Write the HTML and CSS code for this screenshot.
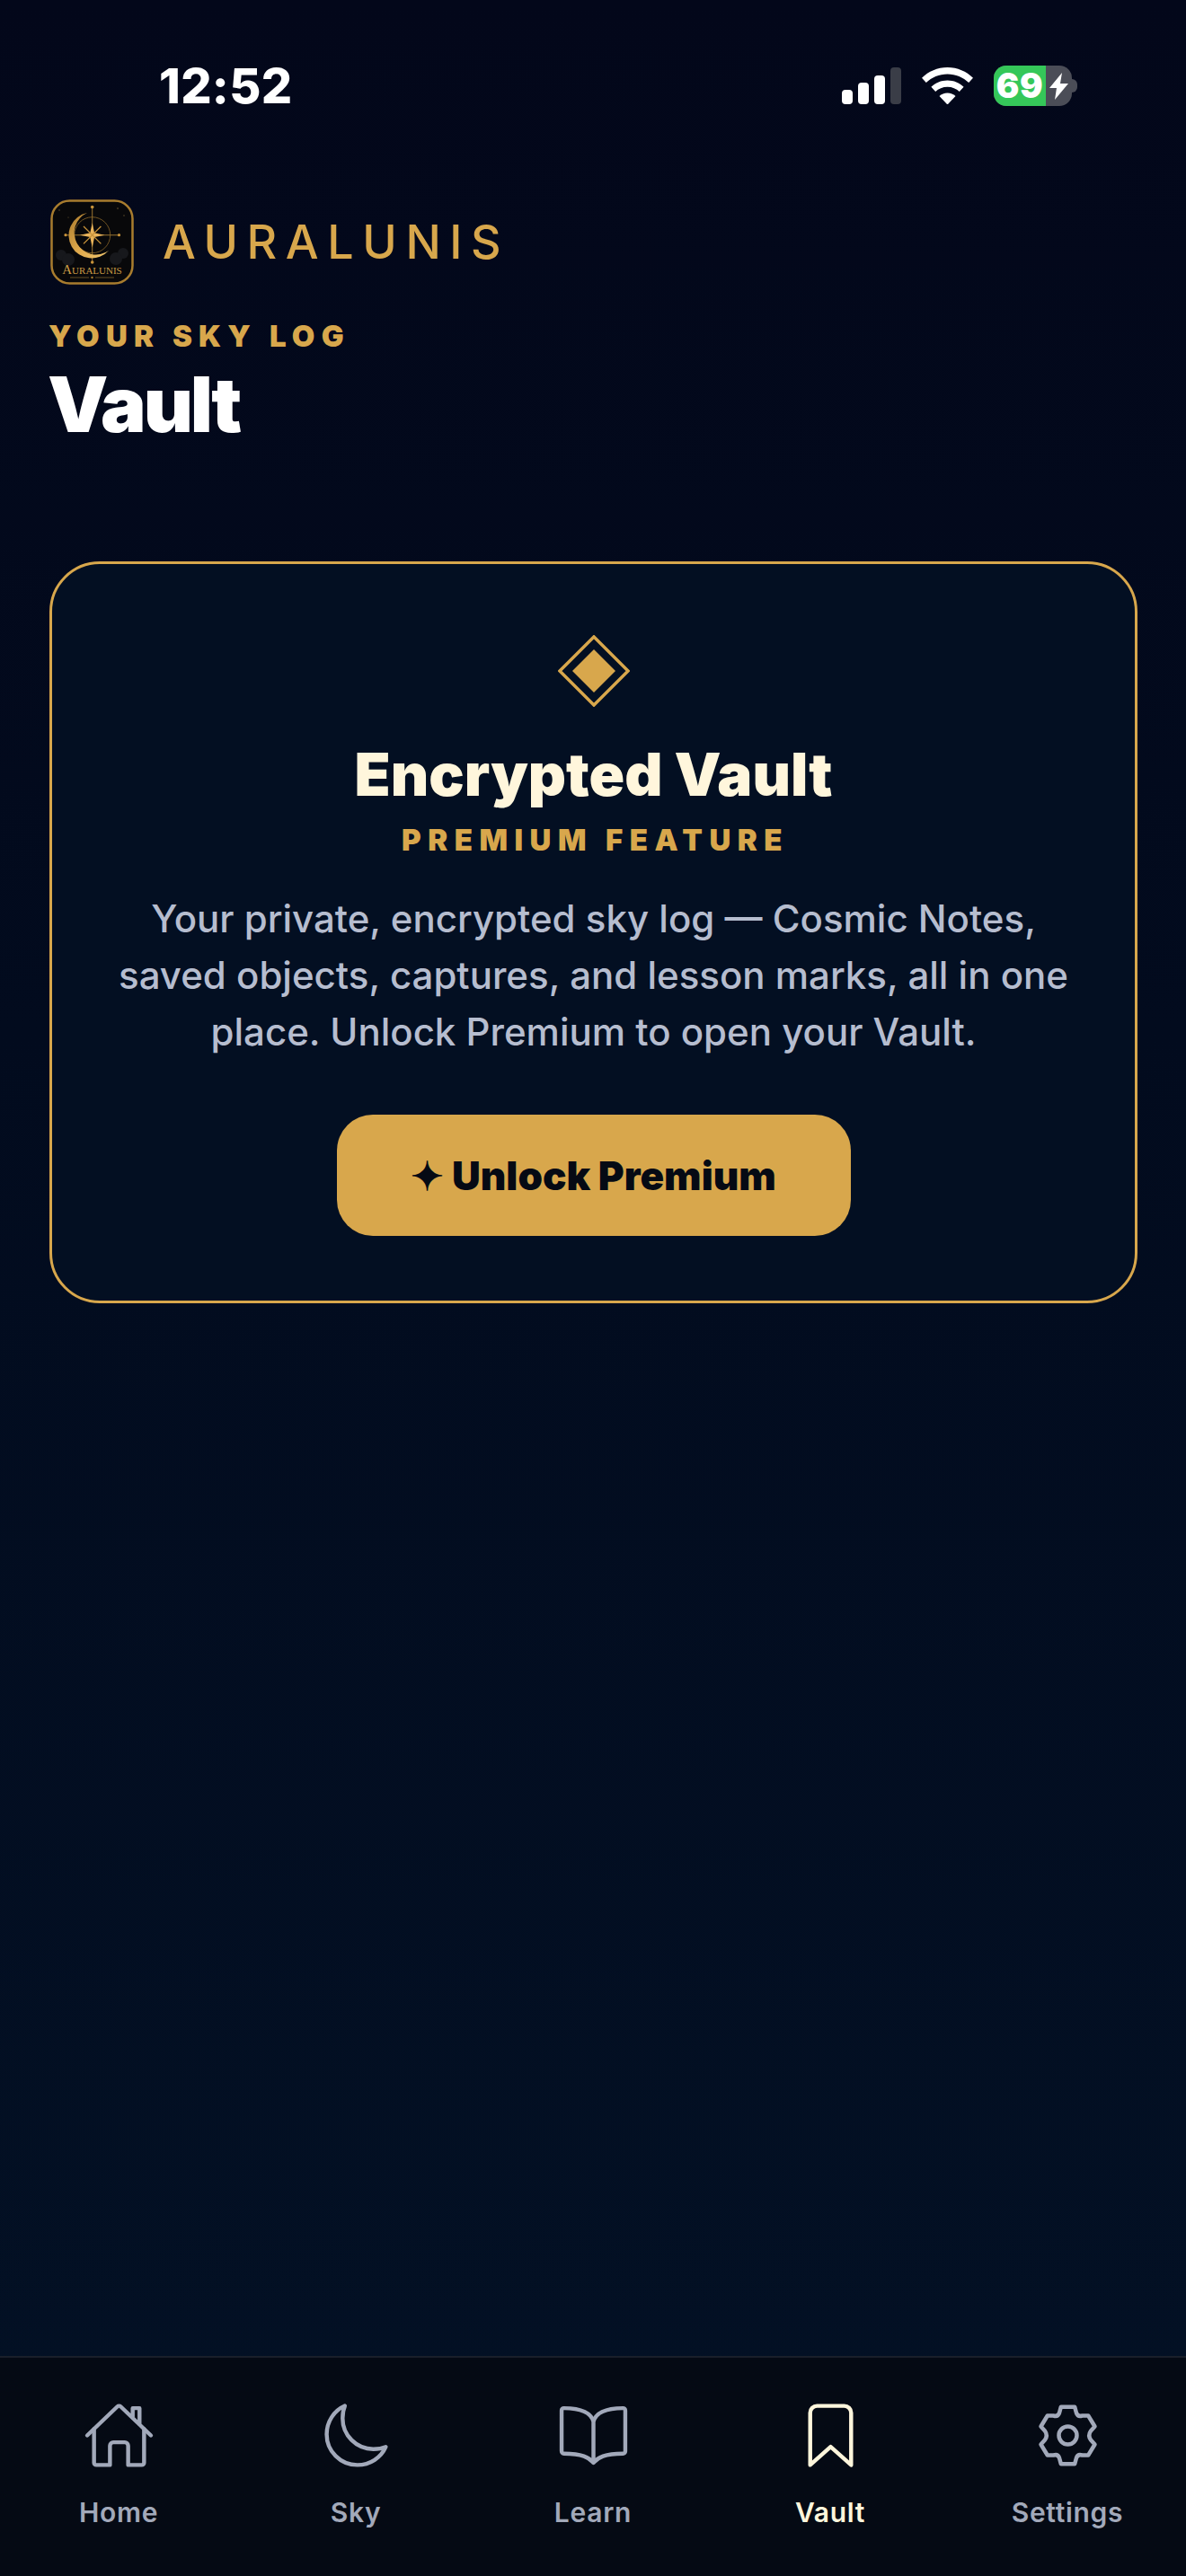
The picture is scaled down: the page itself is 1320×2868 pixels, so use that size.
FILE: index.html
```html
<!DOCTYPE html>
<html lang="en">
<head>
<meta charset="utf-8">
<title>Auralunis Vault</title>
<link rel="stylesheet" href="styles.css">
</head>
<body>
<div class="page">
  <div class="status">
    <div class="time">12:52</div>
    <div class="status-icons">
      <div class="signal">
        <span class="bar b1"></span><span class="bar b2"></span><span class="bar b3"></span><span class="bar b4"></span>
      </div>
      <svg class="wifi" viewBox="0 0 57 41"><path d="M28.5 0C39.6 0 49.6 4.5 57 11.7L52.2 17C46 11 37.7 7.4 28.5 7.4S11 11 4.8 17L0 11.7C7.4 4.5 17.4 0 28.5 0Z" fill="#fff"/><path d="M28.5 14.5c7 0 13.4 2.8 18.1 7.3l-4.8 5.2c-3.4-3.3-8.1-5.3-13.3-5.3s-9.9 2-13.3 5.3l-4.8-5.2c4.7-4.5 11.1-7.3 18.1-7.3Z" fill="#fff"/><path d="M28.5 28.5c3.5 0 6.7 1.3 9 3.5l-9 9.5-9-9.5c2.3-2.2 5.5-3.5 9-3.5Z" fill="#fff"/></svg>
      <div class="battery">
        <div class="batt-body">
          <div class="batt-fill"><span class="batt-num">69</span></div>
          <div class="batt-rest"><svg class="bolt" viewBox="0 0 21 30"><path d="M14 0 0 17h8L6 30 21 12h-9l2-12Z" fill="#fff"/></svg></div>
        </div>
        <span class="batt-tip"></span>
      </div>
    </div>
  </div>

  <header class="head">
    <div class="brand">
      <svg class="logo" viewBox="0 0 93 95">
        <defs>
          <linearGradient id="moon" x1="0" y1="0" x2="1" y2="1">
            <stop offset="0" stop-color="#a97a2c"/>
            <stop offset="0.55" stop-color="#e0aa4d"/>
            <stop offset="1" stop-color="#f0c66e"/>
          </linearGradient>
        </defs>
        <rect x="1.5" y="1.5" width="90" height="92" rx="20" fill="#08080a" stroke="#a87c2e" stroke-width="2.5"/>
        <g fill="#17181c"><circle cx="12" cy="62" r="6"/><circle cx="20" cy="67" r="7"/><circle cx="81" cy="60" r="6"/><circle cx="73" cy="66" r="7"/></g>
        <g fill="#6d5a33"><circle cx="10" cy="12" r=".7"/><circle cx="75" cy="10" r=".8"/><circle cx="82" cy="18" r=".7"/><circle cx="20" cy="20" r=".6"/></g>
        <circle cx="46.7" cy="39.7" r="20" fill="none" stroke="#6f5222" stroke-width="1"/>
        <path d="M46.2 8h1v62h-1Z" fill="#9a7430"/>
        <path d="M17 39.2h60v1H17Z" fill="#9a7430"/>
        <circle cx="46.7" cy="8.5" r="1.8" fill="#c8933a"/>
        <circle cx="46.7" cy="70" r="1.8" fill="#c8933a"/>
        <circle cx="17" cy="39.7" r="1.6" fill="#c8933a"/>
        <circle cx="76.5" cy="39.7" r="1.6" fill="#c8933a"/>
        <path d="M41 15A25.5 25.5 0 1 0 65 57 24.3 24.3 0 1 1 41 15Z" fill="url(#moon)"/>
        <path d="M46.7 26l2.4 11.3 11.3 2.4-11.3 2.4-2.4 11.3-2.4-11.3-11.3-2.4 11.3-2.4Z" fill="#eab45a"/>
        <path d="M37 30 56.4 49.4M56.4 30 37 49.4" stroke="#c8933a" stroke-width="1.3"/>
        <text class="logo-text" x="46.5" y="83" text-anchor="middle">Auralunis</text>
        <path d="M22 87h21M50 87h21" stroke="#7c5f28" stroke-width=".8"/>
        <circle cx="46.5" cy="87" r="1.2" fill="#a87c2e"/>
      </svg>
      <span class="brand-name">AURALUNIS</span>
    </div>
    <div class="eyebrow">YOUR SKY LOG</div>
    <h1 class="title">Vault</h1>
  </header>

  <main class="card">
    <svg class="diamond" viewBox="0 0 80 80">
      <path d="M40 2 78 40 40 78 2 40Z" fill="none" stroke="#d8a74c" stroke-width="3.5"/>
      <path d="M40 16 64 40 40 64 16 40Z" fill="#d8a74c"/>
    </svg>
    <h2 class="card-title">Encrypted Vault</h2>
    <div class="card-sub">PREMIUM FEATURE</div>
    <p class="card-text">Your private, encrypted sky log — Cosmic Notes, saved objects, captures, and lesson marks, all in one place. Unlock Premium to open your Vault.</p>
    <button class="cta">✦ Unlock Premium</button>
  </main>

  <nav class="tabs">
    <div class="tab">
      <svg class="tab-icon" viewBox="0 0 512 512"><path d="M80 212v236a16 16 0 0016 16h96V328a24 24 0 0124-24h80a24 24 0 0124 24v136h96a16 16 0 0016-16V212"/><path d="M480 256L266.89 52c-5-5.28-16.69-5.34-22 0L32 256M400 179V64h-48v69"/></svg>
      <span class="tab-label">Home</span>
    </div>
    <div class="tab">
      <svg class="tab-icon" viewBox="0 0 512 512"><path d="M160 136c0-30.62 4.51-61.61 16-88C99.57 81.27 48 159.32 48 248c0 119.29 96.71 216 216 216 88.68 0 166.73-51.57 200-128-26.39 11.49-57.38 16-88 16-119.29 0-216-96.71-216-216z"/></svg>
      <span class="tab-label">Sky</span>
    </div>
    <div class="tab">
      <svg class="tab-icon" viewBox="0 0 512 512"><path d="M256 160c16-63.16 76.43-95.41 208-96a15.94 15.94 0 0116 16v288a16 16 0 01-16 16c-128 0-177.45 25.81-208 64-30.37-38-80-64-208-64-9.88 0-16-8.05-16-17.93V80a15.94 15.94 0 0116-16c131.57.59 192 32.84 208 96zM256 160v288"/></svg>
      <span class="tab-label">Learn</span>
    </div>
    <div class="tab active">
      <svg class="tab-icon" viewBox="0 0 512 512"><path d="M352 48H160a48 48 0 00-48 48v368l144-128 144 128V96a48 48 0 00-48-48z"/></svg>
      <span class="tab-label">Vault</span>
    </div>
    <div class="tab">
      <svg class="tab-icon gear" viewBox="-40.5 -40.5 81 81"><path d="M-7.7-31.7H7.7L9.5-25Q11-20.5 16-22L22.7-22 30-10 25.5-5Q22 0 25.5 5L30 10 22.7 22 16 22Q11 20.5 9.5 25L7.7 31.7H-7.7L-9.5 25Q-11 20.5-16 22L-22.7 22-30 10-25.5 5Q-22 0-25.5-5L-30-10-22.7-22-16-22Q-11-20.5-9.5-25Z"/><circle cx="0" cy="0" r="10"/></svg>
      <span class="tab-label">Settings</span>
    </div>
  </nav>
</div>
</body>
</html>
```

FILE: styles.css
```css
* { box-sizing: border-box; }
html, body { margin: 0; padding: 0; background: #020617; }
body { font-family: Inter, "Liberation Sans", sans-serif; }

.page {
  width: 1320px;
  height: 2868px;
  display: flex;
  flex-direction: column;
  overflow: hidden;
  background: linear-gradient(180deg, #03071a 0%, #020b1e 40%, #031125 100%);
}

/* status bar */
.status {
  height: 198px;
  padding: 70px 121px 0 177px;
  display: flex;
  justify-content: space-between;
  align-items: flex-start;
  flex: none;
}
.time {
  font-size: 54px;
  font-weight: 800;
  line-height: 52px;
  color: #fff;
  letter-spacing: 0.3px;
}
.status-icons { display: flex; align-items: flex-start; margin-top: 3px; }
.signal { display: flex; align-items: flex-end; gap: 6px; height: 41px; margin-top: 2px; }
.bar { width: 12px; border-radius: 4px; background: #fff; }
.b1 { height: 16px; }
.b2 { height: 24px; }
.b3 { height: 32px; }
.b4 { height: 41px; background: #3a3d47; }
.wifi { width: 57px; height: 41px; margin: 2px 23px 0 23px; }
.battery { display: flex; align-items: center; height: 45px; }
.batt-body { width: 87px; height: 45px; display: flex; border-radius: 14px; background: #4b4d57; }
.batt-fill { width: 58px; background: #35c759; border-radius: 14px 0 0 14px; display: flex; align-items: center; justify-content: center; }
.batt-num { font-size: 38px; font-weight: 900; color: #fff; line-height: 45px; letter-spacing: 0.5px; }
.batt-rest { flex: 1; display: flex; align-items: center; justify-content: center; }
.bolt { width: 21px; height: 30px; }
.batt-tip { width: 6px; height: 15px; background: #4b4d57; border-radius: 0 8px 8px 0; }

/* header */
.head { padding: 0 54px; flex: none; }
.brand { display: flex; align-items: center; gap: 32px; height: 95px; margin: 24px 0 0 2px; }
.logo { width: 93px; height: 95px; flex: none; }
.logo-text { font-family: "Liberation Serif", serif; font-size: 15px; font-variant: small-caps; fill: #c99a45; }
.brand-name { font-size: 52px; font-weight: 500; letter-spacing: 9.6px; color: #d8a74c; line-height: 60px; }
.eyebrow { font-size: 33px; font-weight: 900; letter-spacing: 7.2px; color: #d8a74c; line-height: 40px; margin-top: 37px; }
.title { margin: 7px 0 0 -1px; font-size: 85px; font-weight: 900; letter-spacing: -3px; line-height: 100px; color: #fff; }

/* card */
.card {
  margin: 124px 54px 0 55px;
  height: 826px;
  flex: none;
  border: 3px solid #d8a74c;
  border-radius: 56px;
  background: #030f22;
  display: flex;
  flex-direction: column;
  align-items: center;
  padding-top: 79px;
}
.diamond { width: 80px; height: 80px; flex: none; }
.card-title { margin: 38px 0 0; font-size: 65.5px; font-weight: 900; line-height: 76px; color: #fff6dc; }
.card-sub { margin-top: 14px; padding-left: 4px; font-size: 33px; font-weight: 900; letter-spacing: 7.5px; color: #d8a74c; line-height: 40px; }
.card-text { margin: 36px 0 0; width: 1100px; font-size: 42px; font-weight: 500; line-height: 63px; color: #b6bdcf; text-align: center; }
.cta {
  margin-top: 61px;
  width: 572px;
  height: 135px;
  border: 0;
  border-radius: 40px;
  background: #d8a74c;
  color: #050a14;
  font-family: inherit;
  font-size: 44px;
  font-weight: 900;
}

/* tabs */
.tabs {
  margin-top: auto;
  height: 245px;
  flex: none;
  display: grid;
  grid-template-columns: repeat(5, 264px);
  border-top: 2px solid #1a1f2a;
  background: #050a14;
  padding-top: 46px;
}
.tab { display: flex; flex-direction: column; align-items: center; color: #a2a9ba; }
.tab.active { color: #fff6dc; }
.tab-icon { width: 81px; height: 81px; fill: none; stroke: currentColor; stroke-width: 28; stroke-linecap: round; stroke-linejoin: round; }
.tab-icon.gear { stroke-width: 4.5; }
.tab-label { margin-top: 27px; font-size: 30px; font-weight: 600; letter-spacing: 0.7px; line-height: 36px; }
```
